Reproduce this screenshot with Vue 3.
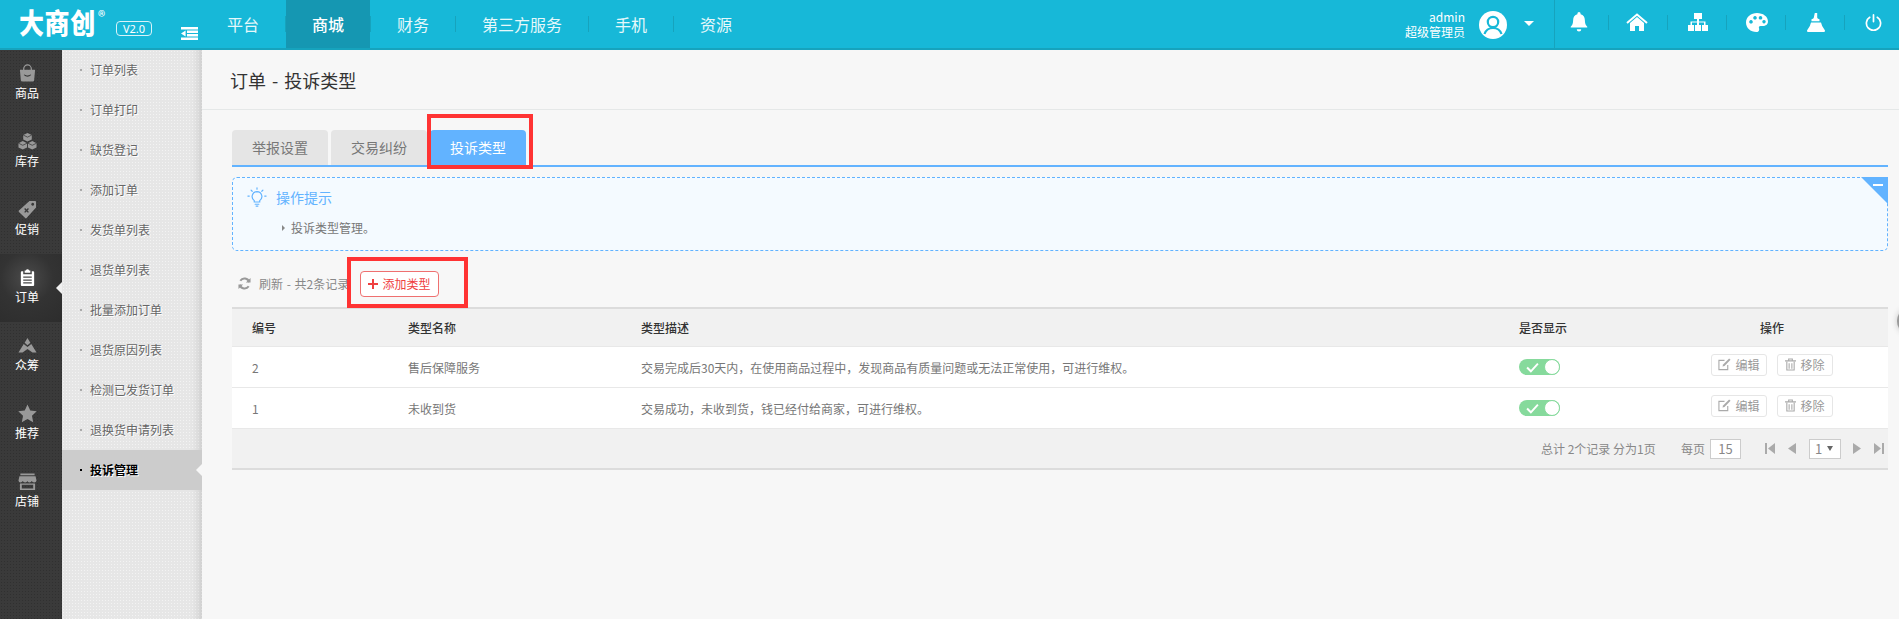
<script setup>
const navItems = ['平台', '商城', '财务', '第三方服务', '手机', '资源']
const railItems = [
  { label: '商品', icon: 'bag' },
  { label: '库存', icon: 'cubes' },
  { label: '促销', icon: 'tag' },
  { label: '订单', icon: 'clip', active: true },
  { label: '众筹', icon: 'crowd' },
  { label: '推荐', icon: 'star' },
  { label: '店铺', icon: 'store' }
]
const subItems = ['订单列表', '订单打印', '缺货登记', '添加订单', '发货单列表', '退货单列表', '批量添加订单', '退货原因列表', '检测已发货订单', '退换货申请列表', '投诉管理']
const rows = [
  { id: 2, name: '售后保障服务', desc: '交易完成后30天内，在使用商品过程中，发现商品有质量问题或无法正常使用，可进行维权。' },
  { id: 1, name: '未收到货', desc: '交易成功，未收到货，钱已经付给商家，可进行维权。' }
]
</script>

<template>
  <div class="page">
    <header class="topbar">
      <div class="brand">
        <span class="logo">大商创</span>
        <span class="reg">®</span>
        <span class="version">V2.0</span>
      </div>
      <svg class="collapse" viewBox="0 0 17 13" width="17" height="13">
        <path fill="#fff" d="M0 0h17v2.4H0zM6 3.6h11V6H6zM6 7h11v2.4H6zM0 10.6h17V13H0zM4.6 3.6v5.8L0 6.5z" />
      </svg>
      <nav class="nav">
        <a v-for="(n, i) in navItems" :key="n" class="nav-item" :class="{ on: i === 1 }">{{ n }}</a>
      </nav>
      <div class="user">
        <div class="user-text">
          <span>admin</span>
          <span>超级管理员</span>
        </div>
        <svg class="avatar" viewBox="0 0 28 28" width="28" height="28">
          <circle cx="14" cy="14" r="14" fill="#fff" />
          <circle cx="14" cy="11" r="5.2" fill="none" stroke="#17b8d8" stroke-width="2.2" />
          <path d="M5.5 23c1.5-4.5 4.5-6 8.5-6s7 1.500 8.500 6" fill="none" stroke="#17b8d8" stroke-width="2.200" />
        </svg>
        <span class="caret"></span>
      </div>
      <div class="tools">
        <span class="tool">
          <svg viewBox="0 0 20 22" width="18" height="20"><path fill="#fff" d="M10 0a1.800 1.800 0 0 1 1.800 1.800v.5c3 .8 4.700 3.300 4.700 6.400 0 4 1 5.800 2.700 7.500v1H.8v-1C2.500 14.500 3.500 12.700 3.500 8.700c0-3.100 1.700-5.600 4.700-6.400v-.5A1.800 1.800 0 0 1 10 0zM7.500 19h5a2.500 2.500 0 0 1-5 0z" /></svg>
        </span>
        <span class="tool">
          <svg viewBox="0 0 22 18" width="22" height="18"><path fill="#fff" d="M11 4l7 6v8h-5v-5H9v5H4v-8z" /><path fill="none" stroke="#fff" stroke-width="2" d="M1 10l10-8.500L21 10" /></svg>
        </span>
        <span class="tool">
          <svg viewBox="0 0 20 18" width="20" height="18"><path fill="#fff" d="M6 0h8v6H6zM9 6h2v2.500h6.500V12h-1.500V9.500H11V12H9V9.500H4V12H2.500V8.500H9zM0 12h6v6H0zM7 12h6v6H7zM14 12h6v6h-6z" /></svg>
        </span>
        <span class="tool">
          <svg viewBox="0 0 22 19" width="22" height="19"><path fill="#fff" fill-rule="evenodd" d="M11 0c6 0 11 3.500 11 8.500 0 3-2.500 4.500-5 4.500h-2.500c-1.500 0-2 1-1.500 2.200.6 1.500 0 3.800-2.500 3.800C4.500 19 0 15 0 9.500 0 4 5 0 11 0zM5 7a1.800 1.800 0 1 0 .01 0zM9 3a1.800 1.800 0 1 0 .01 0zM14.500 3a1.800 1.800 0 1 0 .01 0zM18 7a1.700 1.700 0 1 0 .01 0z" /></svg>
        </span>
        <span class="tool">
          <svg viewBox="0 0 18 19" width="18" height="19"><path fill="#fff" d="M7.800 0h2.400v4.500q0 1 1 1.300l1.300.5v2H4.500v-2l1.300-.5q1-.3 1-1.300zM4 9.500h10q.5 3.500 4 8 0 1.500-1 1.500H1q-1 0-1-1.500 3.500-4.500 4-8z" /></svg>
        </span>
        <span class="tool tool-end">
          <svg viewBox="0 0 18 18" width="17" height="17"><path fill="none" stroke="#fff" stroke-width="1.800" stroke-linecap="round" d="M5 3.500a7.500 7.500 0 1 0 8 0M9 1v7" /></svg>
        </span>
      </div>
    </header>

    <div class="body">
      <aside class="rail">
        <a v-for="r in railItems" :key="r.label" class="rail-item" :class="{ on: r.active }">
          <svg class="rail-icon" viewBox="0 0 20 20" width="19" height="19">
            <template v-if="r.icon === 'bag'">
              <path fill="none" stroke="currentColor" stroke-width="1.300" d="M6 7V5a4 4 0 0 1 8 0v2" />
              <path fill="currentColor" fill-rule="evenodd" d="M2 6h16l-1 11q-.2 1.500-1.500 1.500h-11Q3.200 18.500 3 17zM6 11.500q4 3.600 8 0l-.8-.5q-3.200 2.400-6.400 0z" />
            </template>
            <template v-else-if="r.icon === 'cubes'">
              <path fill="currentColor" d="M10 1l4.500 2.200v4.600L10 10 5.500 7.800V3.200zM5 9.500l4.500 2.300v4.500L5 18.500.5 16.300v-4.500zM15 9.500l4.500 2.300v4.500L15 18.500l-4.500-2.200v-4.500z" />
              <path fill="none" stroke="#3a3a3a" stroke-width=".8" d="M5.500 3.200L10 5.400l4.500-2.200M.5 11.800L5 14l4.500-2.200M10.500 11.800L15 14l4.500-2.200" />
            </template>
            <template v-else-if="r.icon === 'tag'">
              <path fill="currentColor" fill-rule="evenodd" d="M12 1h6a1 1 0 0 1 1 1v6l-10 11q-.7.700-1.400 0L1 12.500q-.7-.7 0-1.400zM15.500 3a1.500 1.500 0 1 0 .01 0zM7.500 8.500l-1 1 1.500 1.500-1.500 1.500 1 1 1.500-1.500 1.500 1.500 1-1L10 11l1.500-1.500-1-1L9 10z" />
            </template>
            <template v-else-if="r.icon === 'clip'">
              <path fill="currentColor" fill-rule="evenodd" d="M7 2.500h1.300a1.800 1.800 0 0 1 3.400 0H13V5H7zM5.500 3.500V6.500h9V3.500H16a1 1 0 0 1 1 1V18a1 1 0 0 1-1 1H4a1 1 0 0 1-1-1V4.500a1 1 0 0 1 1-1zM5.500 9v1.300h9V9zM5.500 12v1.300h9V12zM5.500 15v1.300h9V15z" />
            </template>
            <template v-else-if="r.icon === 'crowd'">
              <path fill="currentColor" d="M10 2l3 5-3 2.800L7 7zM6 8.500l4 3.200 4-3.200 5.500 8.800h-4.300L10 13.800 4.800 17.300H.5z" />
            </template>
            <template v-else-if="r.icon === 'star'">
              <path fill="currentColor" d="M10 .5l2.900 6.300 6.800.8-5 4.700 1.300 6.800L10 15.800 4 19.100l1.300-6.800-5-4.700 6.800-.8z" />
            </template>
            <template v-else>
              <path fill="currentColor" fill-rule="evenodd" d="M2.500 1.500h15v2h-15zM1.500 4.500h17l1 4.500q-.3 2-2.500 2-1.900 0-2.500-1.500-.6 1.500-2.500 1.500T10 9.500Q9.400 11 7.500 11T5 9.500Q4.400 11 2.500 11 .8 11 .5 9zM2 12h16v7H2zM4 13.500v3.800h12v-3.800z" />
            </template>
          </svg>
          <span>{{ r.label }}</span>
        </a>
      </aside>

      <aside class="submenu">
        <a v-for="(s, i) in subItems" :key="s" class="sub-item" :class="{ on: i === subItems.length - 1 }">{{ s }}</a>
      </aside>

      <main class="main">
        <div class="title">订单 - 投诉类型</div>
        <div class="content">
          <div class="tabs">
            <a class="tab">举报设置</a>
            <a class="tab">交易纠纷</a>
            <a class="tab on">投诉类型<i class="mark mark-tab"></i></a>
          </div>

          <section class="tip">
            <div class="tip-head">
              <svg viewBox="0 0 22 22" width="20" height="20">
                <g fill="none" stroke="#62b3ff" stroke-width="1.300" stroke-linecap="round">
                  <path d="M11 5a5.500 5.500 0 0 0-3 10v1.500h6V15a5.500 5.500 0 0 0-3-10zM9 19h4M10 21h2" />
                  <path d="M11 .8v1.700M2.500 10H1M21 10h-1.500M4.500 3.500l1.200 1.200M17.500 3.500l-1.200 1.200" />
                </g>
              </svg>
              <span>操作提示</span>
            </div>
            <div class="tip-line">投诉类型管理。</div>
            <i class="fold"></i>
          </section>

          <div class="toolbar">
            <svg viewBox="0 0 14 14" width="13" height="13">
              <path fill="none" stroke="#999" stroke-width="2.200" d="M12 5.500A5.300 5.300 0 0 0 2.500 4M2 8.500A5.300 5.300 0 0 0 11.500 10" />
              <path fill="#999" d="M13.500 1v5h-5zM.5 13V8h5z" />
            </svg>
            <span class="refresh">刷新 - 共2条记录</span>
            <a class="add">
              <svg viewBox="0 0 10 10" width="10" height="10"><path fill="#ef4040" d="M4 0h2v4h4v2H6v4H4V6H0V4h4z" /></svg>
              添加类型
              <i class="mark mark-add"></i>
            </a>
          </div>

          <div class="table">
            <div class="row head">
              <span>编号</span><span>类型名称</span><span>类型描述</span><span>是否显示</span><span class="ops-head">操作</span>
            </div>
            <div v-for="r in rows" :key="r.id" class="row">
              <span>{{ r.id }}</span>
              <span>{{ r.name }}</span>
              <span>{{ r.desc }}</span>
              <span class="switch">
                <svg viewBox="0 0 12 10" width="13" height="11"><path fill="none" stroke="#fff" stroke-width="1.800" d="M1 5l3.500 3.500L11 1.500" /></svg>
                <i></i>
              </span>
              <span class="ops">
                <a class="op">
                  <svg viewBox="0 0 14 14" width="13" height="13"><path fill="none" stroke="#aaa" stroke-width="1.200" d="M10.500 7.500v5h-9.500v-10h6" /><path fill="#aaa" d="M12 .5l1.500 1.500-6.500 6.500-2.200.7.700-2.200z" /></svg>
                  编辑
                </a>
                <a class="op">
                  <svg viewBox="0 0 12 14" width="11" height="13"><path fill="none" stroke="#aaa" stroke-width="1.200" d="M2 4v9h8V4M0 3h12M4 3V1h4v2M4.500 5.500v6M7.500 5.500v6" /></svg>
                  移除
                </a>
              </span>
            </div>
            <div class="foot">
              <span class="total">总计 2个记录 分为1页</span>
              <span class="per">每页</span>
              <span class="box size">15</span>
              <svg class="pg pg-first" viewBox="0 0 10 11" width="10" height="11"><path fill="#aaa" d="M0 0h2v11H0zM10 0v11L3 5.500z" /></svg>
              <svg class="pg pg-prev" viewBox="0 0 8 11" width="8" height="11"><path fill="#aaa" d="M8 0v11L0 5.500z" /></svg>
              <span class="box pick">1<i></i></span>
              <svg class="pg pg-next" viewBox="0 0 8 11" width="8" height="11"><path fill="#aaa" d="M0 0v11l8-5.500z" /></svg>
              <svg class="pg pg-last" viewBox="0 0 10 11" width="10" height="11"><path fill="#aaa" d="M8 0h2v11H8zM0 0v11l7-5.500z" /></svg>
            </div>
          </div>
        </div>
        <i class="handle"></i>
      </main>
    </div>
  </div>
</template>

<style>
html, body { margin: 0; height: 100%; overflow: hidden; background: #f7f7f7; }
</style>

<style scoped>
.page {
  width: 1899px;
  height: 619px;
  display: flex;
  flex-direction: column;
  overflow: hidden;
  font-family: "Noto Sans CJK SC", "Noto Sans", sans-serif;
  font-size: 12px;
  color: #777;
}
i { font-style: normal; display: block; }

.topbar {
  height: 48px;
  flex: none;
  display: flex;
  background: #17b8d8;
  border-bottom: 2px solid #16a3bd;
  color: #fff;
}
.brand { width: 181px; flex: none; display: flex; padding-left: 19px; box-sizing: border-box; }
.logo {
  width: 77px;
  flex: none;
  font-size: 25px;
  font-weight: 900;
  line-height: 44px;
  letter-spacing: .6px;
  height: 44px;
  transform: scaleY(1.14);
  transform-origin: 50% 55%;
}
.reg { width: 11px; flex: none; font-size: 15px; line-height: 14px; margin: 9px 0 0 2px; }
.version {
  margin: 21px 0 0 7px;
  width: 36px;
  height: 15px;
  box-sizing: border-box;
  border: 1px solid #d8f3f9;
  border-radius: 4px;
  font-family: "Noto Sans", sans-serif;
  font-size: 11px;
  line-height: 13px;
  text-align: center;
}
.collapse { flex: none; margin-top: 27px; }
.nav { display: flex; margin-left: 3px; flex: none; }
.nav-item {
  position: relative;
  padding: 0 26px;
  margin-right: 1px;
  height: 48px;
  line-height: 48px;
  font-size: 16px;
  color: #e6f8fb;
}
.nav-item::after {
  content: "";
  position: absolute;
  right: -1px;
  top: 16px;
  height: 16px;
  width: 1px;
  background: #16a3bd;
}
.nav-item:last-child::after { display: none; }
.nav-item.on { background: #1597b2; color: #fff; font-weight: 500; }
.user { margin-left: auto; display: flex; align-items: center; height: 50px; }
.user-text { display: flex; flex-direction: column; align-items: flex-end; font-size: 12px; line-height: 15px; color: #fff; margin-top: -2px; }
.avatar { margin: -1px 0 0 14px; }
.caret {
  margin: -4px 0 0 17px;
  border-left: 5px solid transparent;
  border-right: 5px solid transparent;
  border-top: 5px solid #fff;
}
.tools {
  margin-left: 20px;
  width: 345px;
  flex: none;
  display: flex;
  border-left: 1px solid #16a3bd;
  box-sizing: border-box;
  height: 48px;
  padding-left: 1px;
}
.tool {
  position: relative;
  width: 59px;
  height: 44px;
  display: flex;
  align-items: center;
  justify-content: center;
  flex: none;
  box-sizing: border-box;
}
.tool:first-child { width: 53px; padding-right: 7px; }
.tool:nth-child(2) { padding-right: 4px; }
.tool.tool-end { width: 56px; }
.tool::after {
  content: "";
  position: absolute;
  right: 0;
  top: 15px;
  height: 15px;
  width: 1px;
  background: #16a3bd;
}
.tool.tool-end::after { display: none; }

.body { flex: 1; display: flex; min-height: 0; }
.rail {
  width: 62px;
  flex: none;
  background-color: #3a3a3a;
  background-image: radial-gradient(rgba(0, 0, 0, .18) 1px, transparent 1px);
  background-size: 3px 3px;
}
.rail-item {
  position: relative;
  display: flex;
  flex-direction: column;
  align-items: center;
  height: 68px;
  box-sizing: border-box;
  padding: 14px 8px 0 0;
  color: #fff;
  font-size: 12px;
  line-height: 20px;
}
.rail-icon { color: #999; }
.rail-item.on { background: radial-gradient(circle at 27px 24px, #4b4b4b 0, #333 26px, #2c2c2c 60px); }
.rail-item.on .rail-icon { color: #fff; }
.rail-item.on::after {
  content: "";
  position: absolute;
  right: 0;
  top: 28px;
  border-top: 6px solid transparent;
  border-bottom: 6px solid transparent;
  border-right: 6px solid #f0f0f0;
}

.submenu {
  width: 140px;
  flex: none;
  background-color: #e6e6e6;
  background-image: radial-gradient(rgba(255, 255, 255, .5) 1px, transparent 1px);
  background-size: 3px 3px;
  box-shadow: inset -10px 0 10px -8px rgba(0, 0, 0, .14);
}
.sub-item {
  position: relative;
  display: block;
  height: 40px;
  line-height: 40px;
  padding-left: 28px;
  color: #666;
  text-shadow: 1px 1px 0 #fff;
}
.sub-item::before {
  content: "";
  position: absolute;
  left: 18px;
  top: 19px;
  width: 2px;
  height: 2px;
  background: #aaa;
}
.sub-item.on { background: #ccc; color: #000; font-weight: 700; }
.sub-item.on::before { background: #000; }
.sub-item.on::after {
  content: "";
  position: absolute;
  right: 0;
  top: 14px;
  border-top: 6px solid transparent;
  border-bottom: 6px solid transparent;
  border-right: 6px solid #f7f7f7;
}

.main { position: relative; flex: 1; min-width: 0; background: #f7f7f7; }
.title {
  height: 60px;
  box-sizing: border-box;
  border-bottom: 1px solid #e5e8e8;
  padding: 0 0 0 28px;
  line-height: 61px;
  font-size: 18px;
  word-spacing: 2px;
  color: #333;
}
.content { padding: 20px 11px 0 30px; }
.tabs { display: flex; gap: 3px; height: 35px; border-bottom: 2px solid #62b3ff; box-sizing: content-box; }
.tab {
  position: relative;
  width: 96px;
  height: 35px;
  line-height: 35px;
  text-align: center;
  background: #e5e5e5;
  border-radius: 4px 4px 0 0;
  font-size: 14px;
  color: #777;
}
.tab.on { background: #62b3ff; color: #fff; }
.mark { position: absolute; border: 4px solid #ff3333; box-sizing: border-box; }
.mark-tab { left: -3px; top: -16px; width: 106px; height: 55px; }

.tip {
  position: relative;
  margin-top: 10px;
  height: 74px;
  box-sizing: border-box;
  border: 1px dashed #62b3ff;
  border-radius: 5px;
  background: #f4faff;
  padding: 9px 0 0 14px;
}
.tip-head { display: flex; align-items: center; gap: 9px; height: 20px; font-size: 14px; color: #62b3ff; }
.tip-line { position: relative; margin: 12px 0 0 44px; line-height: 18px; color: #777; }
.tip-line::before {
  content: "";
  position: absolute;
  left: -9px;
  top: 6px;
  border-left: 3px solid #888;
  border-top: 3px solid transparent;
  border-bottom: 3px solid transparent;
}
.fold {
  position: absolute;
  right: -1px;
  top: -1px;
  width: 27px;
  height: 27px;
  background: #62b3ff;
  clip-path: polygon(0 0, 100% 0, 100% 100%);
}
.fold::after {
  content: "";
  position: absolute;
  right: 5px;
  top: 7px;
  width: 10px;
  height: 2px;
  background: #fff;
}

.toolbar { height: 56px; display: flex; align-items: center; padding: 9px 0 0 6px; box-sizing: border-box; }
.refresh { margin-left: 8px; color: #888; width: 101px; white-space: nowrap; word-spacing: 1px; }
.add {
  position: relative;
  width: 79px;
  height: 26px;
  box-sizing: border-box;
  border: 1px solid #ef7070;
  border-radius: 4px;
  background: #fff;
  color: #ef4040;
  display: flex;
  align-items: center;
  justify-content: center;
  gap: 4px;
}
.mark-add { left: -14px; top: -15px; width: 121px; height: 51px; }

.table { border-top: 2px solid #dcdcdc; border-bottom: 2px solid #dcdcdc; background: #f1f1f1; }
.row {
  display: grid;
  grid-template-columns: 156px 233px 878px 137px 232px;
  padding-left: 20px;
  align-items: center;
  height: 41px;
  box-sizing: border-box;
  background: #fff;
  border-bottom: 1px solid #e8e8e8;
  white-space: nowrap;
}
.row.head { height: 38px; background: #f1f1f1; color: #333; font-weight: 500; }
.ops-head { text-align: center; }
.switch {
  position: relative;
  width: 41px;
  height: 16px;
  border-radius: 8px;
  background: #86da9c;
  display: flex;
  align-items: center;
  padding-left: 7px;
  box-sizing: border-box;
}
.switch i {
  position: absolute;
  right: 0;
  top: 0;
  width: 16px;
  height: 16px;
  box-sizing: border-box;
  border: 1px solid #86da9c;
  border-radius: 50%;
  background: #fff;
}
.ops { display: flex; justify-content: center; gap: 10px; margin-top: -5px; }
.op {
  width: 56px;
  height: 22px;
  box-sizing: border-box;
  border: 1px solid #e6e6e6;
  border-radius: 3px;
  background: #fff;
  color: #999;
  display: flex;
  align-items: center;
  justify-content: center;
  gap: 4px;
}
.foot { height: 39px; display: flex; align-items: center; padding-left: 1309px; color: #888; }
.total { width: 116px; white-space: nowrap; }
.per { margin-left: 24px; width: 29px; }
.box {
  height: 20px;
  box-sizing: border-box;
  border: 1px solid #ccc;
  background: #fff;
  line-height: 18px;
  font-size: 13px;
  text-align: center;
  flex: none;
}
.size { width: 31px; }
.pg { flex: none; }
.pg-first { margin-left: 24px; }
.pg-prev { margin-left: 13px; }
.pick { width: 32px; margin-left: 13px; position: relative; text-align: left; padding-left: 5px; }
.pick i {
  position: absolute;
  right: 7px;
  top: 6px;
  border-left: 3px solid transparent;
  border-right: 3px solid transparent;
  border-top: 5px solid #666;
}
.pg-next { margin-left: 12px; }
.pg-last { margin-left: 13px; }
.handle {
  position: absolute;
  right: -18px;
  top: 259px;
  width: 20px;
  height: 24px;
  border-radius: 50%;
  background: #999;
  box-shadow: 0 0 6px rgba(0, 0, 0, .2);
}
</style>
